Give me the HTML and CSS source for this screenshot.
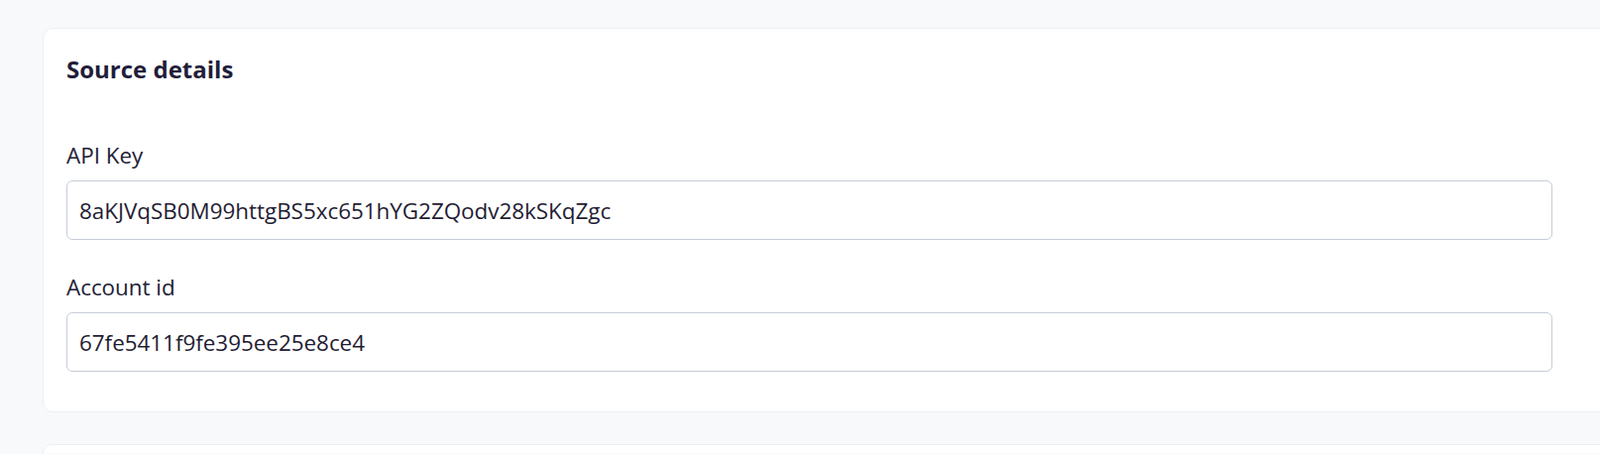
FILE: index.html
```html
<!DOCTYPE html>
<html lang="en">

<head>
    <meta charset="UTF-8">
    <meta name="viewport" content="width=device-width, initial-scale=1.0">
    <title>Source details</title>
    <link rel="stylesheet" href="styles.css">
</head>

<body>
    <div class="page">
        <div class="card">
            <h2>Source details</h2>
            <div class="form">
                <div class="form-group">
                    <label for="apiKey">API Key</label>
                    <input type="text" id="apiKey" name="apiKey" value="8aKJVqSB0M99httgBS5xc651hYG2ZQodv28kSKqZgc">
                </div>
                <div class="form-group">
                    <label for="accountId">Account id</label>
                    <input type="text" id="accountId" name="accountId" value="67fe5411f9fe395ee25e8ce4">
                </div>
            </div>
        </div>
        <div class="card card-next"></div>
    </div>
</body>

</html>
```

FILE: styles.css
```css
body {
    font-family: "Open Sans", Arial, sans-serif;
    margin: 0;
    padding: 0;
    background-color: #f8f9fb;
    color: #1f1c33;
    overflow: hidden;
    height: 458px;
}

.page {
    padding: 28px 0 0 43px;
}

.card {
    background-color: #fff;
    border: 1px solid #eceef2;
    border-radius: 10px;
    margin-right: -40px;
    padding: 25px 24px 40px 23px;
}

.card h2 {
    margin: 0 0 56px;
    font-size: 24px;
    line-height: 32px;
    font-weight: 700;
    color: #221d3a;
}

.form {
    max-width: 1499px;
}

.form-group {
    margin-bottom: 33px;
}

.form-group:last-child {
    margin-bottom: 0;
}

.form-group label {
    display: block;
    font-size: 22.4px;
    line-height: 30px;
    margin-bottom: 10px;
    color: #222035;
}

.form-group input {
    display: block;
    width: 100%;
    height: 60px;
    padding: 0 12px;
    box-sizing: border-box;
    border: 1px solid #c6cdd9;
    border-radius: 6px;
    font-family: "Open Sans", Arial, sans-serif;
    font-size: 22.4px;
    color: #1f1c33;
    background-color: #fff;
    outline: none;
}

.card-next {
    margin-top: 32px;
    height: 8px;
    padding: 0;
    border-bottom: none;
    border-radius: 10px 10px 0 0;
}
```
